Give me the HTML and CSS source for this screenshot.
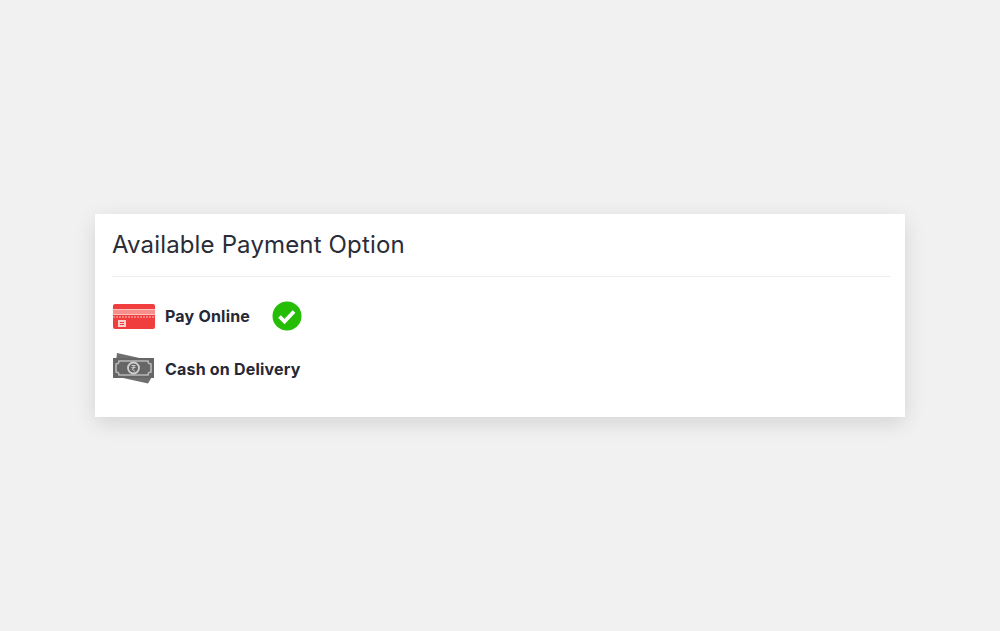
FILE: index.html
```html
<!DOCTYPE html>
<html lang="en">
<head>
    <meta charset="UTF-8">
    <meta name="viewport" content="width=device-width, initial-scale=1.0">
    <title>Available Payment Option</title>
    <link rel="stylesheet" href="styles.css">
</head>
<body>
    <div class="payment-card">
        <h2 class="payment-title">Available Payment Option</h2>
        <ul class="payment-list">
            <li class="payment-row">
                <svg class="payment-icon" width="44" height="28" viewBox="0 0 44 28">
                    <rect x="1" y="1" width="42" height="25" rx="2" fill="#f03e3e"/>
                    <rect x="1" y="6" width="42" height="1" fill="#fbc4c0"/>
                    <rect x="1" y="7" width="42" height="4" fill="#f98f8b"/>
                    <rect x="1" y="11" width="42" height="1" fill="#fbc4c0"/>
                    <path d="M1 14h42" stroke="#fbc4c0" stroke-width="1" stroke-dasharray="2 1"/>
                    <rect x="6" y="17" width="8" height="7" fill="#fbd0cc"/>
                    <rect x="8" y="19" width="4" height="1" fill="#f03e3e"/>
                    <rect x="8" y="21" width="4" height="1" fill="#f03e3e"/>
                </svg>
                <span class="payment-label">Pay Online</span>
                <svg class="payment-check" width="30" height="30" viewBox="0 0 30 30">
                    <circle cx="15" cy="15" r="14.5" fill="#25bd05"/>
                    <path d="M7.500 15.500l5 5 9.500-10" fill="none" stroke="#fff" stroke-width="3.800"/>
                </svg>
            </li>
            <li class="payment-row">
                <svg class="payment-icon payment-icon-cash" width="44" height="32" viewBox="0 0 44 32">
                    <path d="M5 1l36 8v14l-5 8.500L2 24z" fill="#6f6f6f"/>
                    <rect x="1" y="6" width="41" height="20" fill="#666"/>
                    <path d="M7 9h29a3 3 0 0 0 3 3v8a3 3 0 0 0-3 3H7a3 3 0 0 0-3-3v-8a3 3 0 0 0 3-3z" fill="none" stroke="#b8b8b8" stroke-width="1.600"/>
                    <circle cx="21.500" cy="16" r="5.500" fill="#666" stroke="#d0d0d0" stroke-width="1.800"/>
                    <path d="M19.500 13.500h4M19.500 15.500h4M20 13.500c3 0 3 3.500 0 3.500l3 2.500" fill="none" stroke="#d0d0d0" stroke-width="0.900"/>
                </svg>
                <span class="payment-label">Cash on Delivery</span>
            </li>
        </ul>
    </div>
</body>
</html>
```

FILE: styles.css
```css
body {
    font-family: Inter, "Noto Sans", sans-serif;
    margin: 0;
    height: 631px;
    background: #f1f1f1;
    display: flex;
    align-items: center;
    justify-content: center;
    overflow: hidden;
}

.payment-card {
    box-sizing: border-box;
    width: 810px;
    height: 203px;
    margin-top: -1px;
    padding: 0 15px 0 17px;
    background: white;
    box-shadow: 0 6px 20px rgba(0,0,0,0.12);
}

.payment-title {
    margin: 0;
    height: 62px;
    border-bottom: 1px solid #ececec;
    font-size: 24px;
    font-weight: 400;
    letter-spacing: 0.15px;
    line-height: 61px;
    color: #2a2c38;
}

.payment-list {
    list-style: none;
    margin: 0;
    padding: 23px 0 0;
}

.payment-row {
    display: flex;
    align-items: center;
    height: 34px;
    margin-bottom: 19px;
}

.payment-icon {
    flex: none;
    margin-right: 9px;
}

.payment-icon-cash {
    margin-bottom: 4px;
}

.payment-label {
    font-size: 16px;
    font-weight: 700;
    letter-spacing: 0.2px;
    color: #262835;
    margin-bottom: 2px;
}

.payment-check {
    margin: 0 0 2px 22px;
}
```
